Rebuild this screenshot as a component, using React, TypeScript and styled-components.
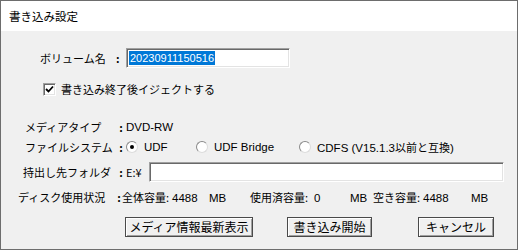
import React from 'react';
import styled, { createGlobalStyle } from 'styled-components';

const Global = createGlobalStyle`
  html, body { margin: 0; padding: 0; background: #f0f0f0; }
  body { font-family: "Noto Sans CJK JP", "Noto Sans", sans-serif; }
`;

const Window = styled.div`
  width: 518px;
  height: 250px;
  box-sizing: border-box;
  border: 1px solid #6d6d6d;
  display: flex;
  flex-direction: column;
  background: #f0f0f0;
  font-family: "Noto Sans CJK JP", "Noto Sans", sans-serif;
  font-size: 11px;
  color: #000;
`;

const TitleBar = styled.div`
  height: 30px;
  flex: none;
  background: #fff;
  display: flex;
  align-items: center;
  padding-left: 8px;
  font-size: 11.5px;
`;

const Body = styled.div`
  flex: 1;
  display: flex;
  flex-direction: column;
  padding-top: 17px;
`;

const Row = styled.div<{ $mt?: number; $indent?: number }>`
  display: flex;
  align-items: center;
  height: 20px;
  line-height: 20px;
  white-space: nowrap;
  margin-top: ${(p) => p.$mt ?? 0}px;
  padding-left: ${(p) => p.$indent ?? 0}px;
`;

const Label = styled.span<{ $indent: number }>`
  box-sizing: border-box;
  width: 115px;
  padding-left: ${(p) => p.$indent}px;
`;

const Colon = styled.span<{ $w?: number; $left?: boolean }>`
  width: ${(p) => p.$w ?? 10}px;
  text-align: ${(p) => (p.$left ? 'left' : 'center')};
  font-weight: bold;
`;

const TextField = styled.div<{ $w: number }>`
  box-sizing: border-box;
  width: ${(p) => p.$w}px;
  height: 20px;
  background: #fff;
  border: 1px solid;
  border-color: #a0a0a0 #fff #fff #a0a0a0;
  box-shadow: inset 1px 1px #696969, inset -1px -1px #e3e3e3;
  display: flex;
  align-items: center;
  padding-left: 2px;
`;

const Selected = styled.span`
  background: #0078d7;
  color: #fff;
  line-height: 14px;
  height: 14px;
  padding: 0 1px;
  font-family: "Liberation Sans", "Noto Sans", sans-serif;
  font-size: 11px;
`;

const CheckBox = styled.span`
  width: 13px;
  height: 13px;
  box-sizing: border-box;
  background: #fff;
  border: 1px solid;
  border-color: #a0a0a0 #fff #fff #a0a0a0;
  box-shadow: inset 1px 1px #696969, inset -1px -1px #e3e3e3;
  display: flex;
  align-items: center;
  justify-content: center;
  margin-right: 5px;
`;

const RadioGroup = styled.div`
  display: grid;
  grid-template-columns: 70px 103px auto;
  align-items: center;
`;

const RadioItem = styled.label`
  display: flex;
  align-items: center;
  gap: 6px;
`;

const RadioCircle = styled.span<{ $on?: boolean }>`
  width: 12px;
  height: 12px;
  box-sizing: border-box;
  border-radius: 50%;
  background: #fff;
  border: 1px solid;
  border-color: #8a8a8a #dcdcdc #dcdcdc #8a8a8a;
  display: flex;
  align-items: center;
  justify-content: center;
  &::after {
    content: "";
    width: 4px;
    height: 4px;
    border-radius: 50%;
    background: ${(p) => (p.$on ? '#000' : 'transparent')};
  }
`;

const Latin = styled.span`
  font-family: "Liberation Sans", "Noto Sans", sans-serif;
  font-size: 11.5px;
`;

const Stat = styled.span<{ $w: number }>`
  display: inline-block;
  width: ${(p) => p.$w}px;
`;

const ButtonBar = styled.div`
  display: flex;
  align-items: center;
  margin-top: 10px;
  padding-left: 124px;
`;

const Button = styled.button<{ $w: number; $ml?: number }>`
  box-sizing: border-box;
  width: ${(p) => p.$w}px;
  height: 20px;
  margin-left: ${(p) => p.$ml ?? 0}px;
  padding: 0;
  background: #f0f0f0;
  border: 1px solid #4a4a4a;
  border-radius: 0;
  box-shadow: inset 1px 1px #fff, inset -1px -1px #a0a0a0;
  font-family: "Noto Sans CJK JP", sans-serif;
  font-size: 12px;
  line-height: 18px;
  color: #000;
`;

export default function App() {
  return (
    <>
      <Global />
      <Window>
        <TitleBar>書き込み設定</TitleBar>
        <Body>
          <Row>
            <Label $indent={39}>ボリューム名</Label>
            <Colon $left>:</Colon>
            <TextField $w={164}>
              <Selected>20230911150516</Selected>
            </TextField>
          </Row>
          <Row $mt={11} $indent={42}>
            <CheckBox>
              <svg width="9" height="9" viewBox="0 0 9 9">
                <path d="M1 4 L3.5 6.5 L8 1.5" stroke="#000" strokeWidth="1.8" fill="none" />
              </svg>
            </CheckBox>
            書き込み終了後イジェクトする
          </Row>
          <Row $mt={18}>
            <Label $indent={24}>メディアタイプ</Label>
            <Colon>:</Colon>
            <Latin>DVD-RW</Latin>
          </Row>
          <Row>
            <Label $indent={24}>ファイルシステム</Label>
            <Colon>:</Colon>
            <RadioGroup>
              <RadioItem>
                <RadioCircle $on />
                <Latin>UDF</Latin>
              </RadioItem>
              <RadioItem>
                <RadioCircle />
                <Latin>UDF Bridge</Latin>
              </RadioItem>
              <RadioItem>
                <RadioCircle />
                <span>
                  <Latin>CDFS (V15.1.3</Latin>以前と互換<Latin>)</Latin>
                </span>
              </RadioItem>
            </RadioGroup>
          </Row>
          <Row $mt={5}>
            <Label $indent={22}>持出し先フォルダ</Label>
            <Colon>:</Colon>
            <Stat $w={23}>E:¥</Stat>
            <TextField $w={355} />
          </Row>
          <Row $mt={5}>
            <Label $indent={17}>ディスク使用状況</Label>
            <Colon $w={6}>:</Colon>
            <Stat $w={50}>全体容量:</Stat>
            <Stat $w={37}><Latin>4488</Latin></Stat>
            <Stat $w={41}><Latin>MB</Latin></Stat>
            <Stat $w={64}>使用済容量:</Stat>
            <Stat $w={36}><Latin>0</Latin></Stat>
            <Stat $w={23}><Latin>MB</Latin></Stat>
            <Stat $w={50}>空き容量:</Stat>
            <Stat $w={48}><Latin>4488</Latin></Stat>
            <Stat $w={20}><Latin>MB</Latin></Stat>
          </Row>
          <ButtonBar>
            <Button $w={128}>メディア情報最新表示</Button>
            <Button $w={85} $ml={34}>書き込み開始</Button>
            <Button $w={76} $ml={46}>キャンセル</Button>
          </ButtonBar>
        </Body>
      </Window>
    </>
  );
}
